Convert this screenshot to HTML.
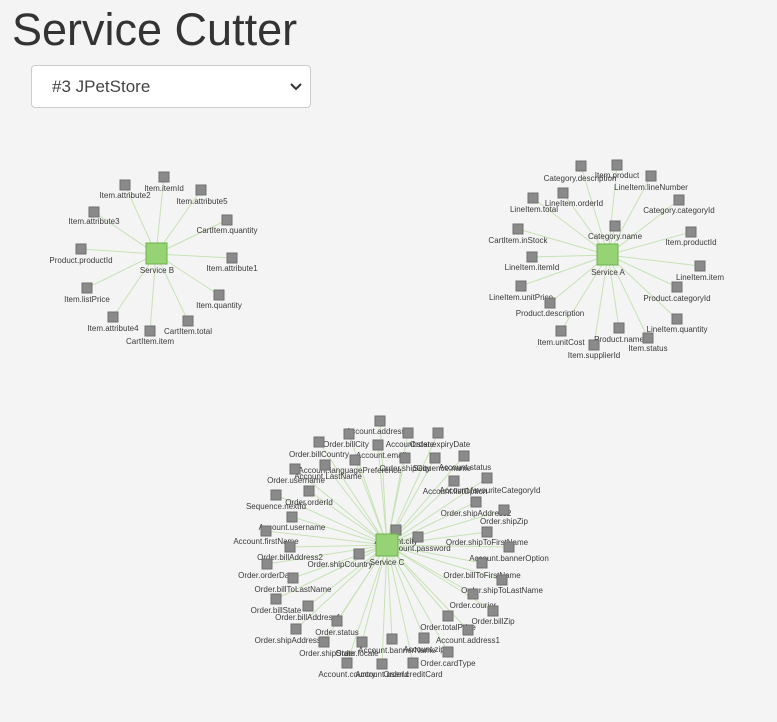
<!DOCTYPE html>
<html><head><meta charset="utf-8"><style>
body{margin:0;background:#f4f4f4;width:777px;height:722px;overflow:hidden;font-family:"Liberation Sans",sans-serif}
h1{position:absolute;left:12px;top:2px;margin:0;font-weight:400;font-size:45px;color:#333;line-height:56px}
.sel{position:absolute;left:31px;top:65px;width:280px;height:43px;background:#fff;border:1px solid #ccc;border-radius:4px;box-sizing:border-box}
.sel span{position:absolute;left:20px;top:11px;font-size:17px;color:#444}
.sel svg{position:absolute;right:8px;top:17px}
svg.g{position:absolute;left:0;top:0}
.g line{stroke:#c6e2b5;stroke-width:1}
.g rect.n{fill:#8a8a8a;stroke:#707070;stroke-width:1}
.g rect.s{fill:#95d374;stroke:#6cb24a;stroke-width:1}
.g text{font-size:8px;fill:#3a3a3a;text-anchor:middle;font-family:"Liberation Sans",sans-serif}
</style></head><body>
<h1>Service Cutter</h1>
<div class="sel"><span>#3 JPetStore</span><svg width="12" height="8"><path d="M1 1L6 6L11 1" stroke="#333" stroke-width="2" fill="none"/></svg></div>
<svg class="g" width="777" height="722">
<g>
<line x1="156" y1="254" x2="164" y2="177"/><line x1="156" y1="254" x2="125" y2="185"/><line x1="156" y1="254" x2="201" y2="190"/><line x1="156" y1="254" x2="94" y2="212"/><line x1="156" y1="254" x2="227" y2="220"/><line x1="156" y1="254" x2="81" y2="249"/><line x1="156" y1="254" x2="232" y2="258"/><line x1="156" y1="254" x2="87" y2="288"/><line x1="156" y1="254" x2="219" y2="295"/><line x1="156" y1="254" x2="113" y2="317"/><line x1="156" y1="254" x2="188" y2="321"/><line x1="156" y1="254" x2="150" y2="331"/>
<line x1="608" y1="255" x2="581" y2="166"/><line x1="608" y1="255" x2="617" y2="165"/><line x1="608" y1="255" x2="651" y2="176"/><line x1="608" y1="255" x2="563" y2="193"/><line x1="608" y1="255" x2="533" y2="198"/><line x1="608" y1="255" x2="679" y2="200"/><line x1="608" y1="255" x2="615" y2="226"/><line x1="608" y1="255" x2="518" y2="229"/><line x1="608" y1="255" x2="691" y2="232"/><line x1="608" y1="255" x2="532" y2="257"/><line x1="608" y1="255" x2="700" y2="266"/><line x1="608" y1="255" x2="521" y2="286"/><line x1="608" y1="255" x2="677" y2="287"/><line x1="608" y1="255" x2="550" y2="303"/><line x1="608" y1="255" x2="677" y2="319"/><line x1="608" y1="255" x2="561" y2="331"/><line x1="608" y1="255" x2="619" y2="328"/><line x1="608" y1="255" x2="648" y2="338"/><line x1="608" y1="255" x2="594" y2="345"/>
<line x1="387" y1="545" x2="380" y2="421"/><line x1="387" y1="545" x2="349" y2="434"/><line x1="387" y1="545" x2="319" y2="442"/><line x1="387" y1="545" x2="378" y2="445"/><line x1="387" y1="545" x2="355" y2="460"/><line x1="387" y1="545" x2="325" y2="465"/><line x1="387" y1="545" x2="295" y2="469"/><line x1="387" y1="545" x2="309" y2="491"/><line x1="387" y1="545" x2="276" y2="495"/><line x1="387" y1="545" x2="292" y2="517"/><line x1="387" y1="545" x2="266" y2="531"/><line x1="387" y1="545" x2="290" y2="547"/><line x1="387" y1="545" x2="359" y2="554"/><line x1="387" y1="545" x2="267" y2="564"/><line x1="387" y1="545" x2="293" y2="578"/><line x1="387" y1="545" x2="276" y2="599"/><line x1="387" y1="545" x2="308" y2="606"/><line x1="387" y1="545" x2="337" y2="621"/><line x1="387" y1="545" x2="296" y2="629"/><line x1="387" y1="545" x2="324" y2="642"/><line x1="387" y1="545" x2="362" y2="642"/><line x1="387" y1="545" x2="392" y2="639"/><line x1="387" y1="545" x2="347" y2="663"/><line x1="387" y1="545" x2="382" y2="664"/><line x1="387" y1="545" x2="408" y2="433"/><line x1="387" y1="545" x2="438" y2="433"/><line x1="387" y1="545" x2="405" y2="458"/><line x1="387" y1="545" x2="435" y2="458"/><line x1="387" y1="545" x2="464" y2="456"/><line x1="387" y1="545" x2="454" y2="481"/><line x1="387" y1="545" x2="487" y2="478"/><line x1="387" y1="545" x2="476" y2="502"/><line x1="387" y1="545" x2="504" y2="510"/><line x1="387" y1="545" x2="396" y2="530"/><line x1="387" y1="545" x2="418" y2="537"/><line x1="387" y1="545" x2="487" y2="532"/><line x1="387" y1="545" x2="509" y2="547"/><line x1="387" y1="545" x2="482" y2="563"/><line x1="387" y1="545" x2="502" y2="580"/><line x1="387" y1="545" x2="473" y2="594"/><line x1="387" y1="545" x2="493" y2="611"/><line x1="387" y1="545" x2="448" y2="616"/><line x1="387" y1="545" x2="468" y2="630"/><line x1="387" y1="545" x2="424" y2="638"/><line x1="387" y1="545" x2="448" y2="652"/><line x1="387" y1="545" x2="413" y2="663"/>
</g>
<g>
<rect class="n" x="159" y="172" width="10" height="10"/><text x="164" y="191">Item.itemId</text>
<rect class="n" x="120" y="180" width="10" height="10"/><text x="125" y="198">Item.attribute2</text>
<rect class="n" x="196" y="185" width="10" height="10"/><text x="202" y="204">Item.attribute5</text>
<rect class="n" x="89" y="207" width="10" height="10"/><text x="94" y="224">Item.attribute3</text>
<rect class="n" x="222" y="215" width="10" height="10"/><text x="227" y="233">CartItem.quantity</text>
<rect class="n" x="76" y="244" width="10" height="10"/><text x="81" y="263">Product.productId</text>
<rect class="n" x="227" y="253" width="10" height="10"/><text x="232" y="271">Item.attribute1</text>
<rect class="n" x="82" y="283" width="10" height="10"/><text x="87" y="302">Item.listPrice</text>
<rect class="n" x="214" y="290" width="10" height="10"/><text x="219" y="308">Item.quantity</text>
<rect class="n" x="108" y="312" width="10" height="10"/><text x="113" y="331">Item.attribute4</text>
<rect class="n" x="183" y="316" width="10" height="10"/><text x="188" y="334">CartItem.total</text>
<rect class="n" x="145" y="326" width="10" height="10"/><text x="150" y="344">CartItem.item</text>
<rect class="s" x="146" y="243" width="21" height="21"/><text x="157" y="273">Service B</text>

<rect class="n" x="576" y="161" width="10" height="10"/><text x="580" y="181">Category.description</text>
<rect class="n" x="612" y="160" width="10" height="10"/><text x="617" y="178">Item.product</text>
<rect class="n" x="646" y="171" width="10" height="10"/><text x="651" y="190">LineItem.lineNumber</text>
<rect class="n" x="558" y="188" width="10" height="10"/><text x="574" y="206">LineItem.orderId</text>
<rect class="n" x="528" y="193" width="10" height="10"/><text x="534" y="212">LineItem.total</text>
<rect class="n" x="674" y="195" width="10" height="10"/><text x="679" y="213">Category.categoryId</text>
<rect class="n" x="610" y="221" width="10" height="10"/><text x="615" y="239">Category.name</text>
<rect class="n" x="513" y="224" width="10" height="10"/><text x="518" y="243">CartItem.inStock</text>
<rect class="n" x="686" y="227" width="10" height="10"/><text x="691" y="245">Item.productId</text>
<rect class="n" x="527" y="252" width="10" height="10"/><text x="532" y="270">LineItem.itemId</text>
<rect class="n" x="695" y="261" width="10" height="10"/><text x="700" y="280">LineItem.item</text>
<rect class="n" x="516" y="281" width="10" height="10"/><text x="521" y="300">LineItem.unitPrice</text>
<rect class="n" x="672" y="282" width="10" height="10"/><text x="677" y="301">Product.categoryId</text>
<rect class="n" x="545" y="298" width="10" height="10"/><text x="550" y="316">Product.description</text>
<rect class="n" x="672" y="314" width="10" height="10"/><text x="677" y="332">LineItem.quantity</text>
<rect class="n" x="556" y="326" width="10" height="10"/><text x="561" y="345">Item.unitCost</text>
<rect class="n" x="614" y="323" width="10" height="10"/><text x="619" y="342">Product.name</text>
<rect class="n" x="643" y="333" width="10" height="10"/><text x="648" y="351">Item.status</text>
<rect class="n" x="589" y="340" width="10" height="10"/><text x="594" y="358">Item.supplierId</text>
<rect class="s" x="597" y="244" width="21" height="21"/><text x="608" y="275">Service A</text>

<rect class="n" x="375" y="416" width="10" height="10"/><text x="378" y="434">Account.address2</text>
<rect class="n" x="344" y="429" width="10" height="10"/><text x="346" y="447">Order.billCity</text>
<rect class="n" x="314" y="437" width="10" height="10"/><text x="319" y="457">Order.billCountry</text>
<rect class="n" x="373" y="440" width="10" height="10"/><text x="381" y="458">Account.email</text>
<rect class="n" x="350" y="455" width="10" height="10"/><text x="350" y="473">Account.languagePreference</text>
<rect class="n" x="320" y="460" width="10" height="10"/><text x="328" y="479">Account.LastName</text>
<rect class="n" x="290" y="464" width="10" height="10"/><text x="296" y="483">Order.username</text>
<rect class="n" x="304" y="486" width="10" height="10"/><text x="309" y="505">Order.orderId</text>
<rect class="n" x="271" y="490" width="10" height="10"/><text x="276" y="509">Sequence.nextId</text>
<rect class="n" x="287" y="512" width="10" height="10"/><text x="292" y="530">Account.username</text>
<rect class="n" x="261" y="526" width="10" height="10"/><text x="266" y="544">Account.firstName</text>
<rect class="n" x="285" y="542" width="10" height="10"/><text x="290" y="560">Order.billAddress2</text>
<rect class="n" x="354" y="549" width="10" height="10"/><text x="340" y="567">Order.shipCountry</text>
<rect class="n" x="262" y="559" width="10" height="10"/><text x="267" y="578">Order.orderDate</text>
<rect class="n" x="288" y="573" width="10" height="10"/><text x="293" y="592">Order.billToLastName</text>
<rect class="n" x="271" y="594" width="10" height="10"/><text x="276" y="613">Order.billState</text>
<rect class="n" x="303" y="601" width="10" height="10"/><text x="308" y="620">Order.billAddress1</text>
<rect class="n" x="332" y="616" width="10" height="10"/><text x="337" y="635">Order.status</text>
<rect class="n" x="291" y="624" width="10" height="10"/><text x="290" y="643">Order.shipAddress1</text>
<rect class="n" x="319" y="637" width="10" height="10"/><text x="327" y="656">Order.shipState</text>
<rect class="n" x="357" y="637" width="10" height="10"/><text x="357" y="656">Order.locale</text>
<rect class="n" x="387" y="634" width="10" height="10"/><text x="397" y="653">Account.bannerName</text>
<rect class="n" x="342" y="658" width="10" height="10"/><text x="347" y="677">Account.country</text>
<rect class="n" x="377" y="659" width="10" height="10"/><text x="382" y="677">Account.userId</text>
<rect class="n" x="403" y="428" width="10" height="10"/><text x="410" y="447">Account.state</text>
<rect class="n" x="433" y="428" width="10" height="10"/><text x="440" y="447">Order.expiryDate</text>
<rect class="n" x="400" y="453" width="10" height="10"/><text x="405" y="471">Order.shipCity</text>
<rect class="n" x="430" y="453" width="10" height="10"/><text x="442" y="471">Sequence.name</text>
<rect class="n" x="459" y="451" width="10" height="10"/><text x="465" y="470">Account.status</text>
<rect class="n" x="449" y="476" width="10" height="10"/><text x="455" y="494">Account.listOption</text>
<rect class="n" x="482" y="473" width="10" height="10"/><text x="490" y="493">Account.favouriteCategoryId</text>
<rect class="n" x="471" y="497" width="10" height="10"/><text x="476" y="516">Order.shipAddress2</text>
<rect class="n" x="499" y="505" width="10" height="10"/><text x="504" y="524">Order.shipZip</text>
<rect class="n" x="391" y="525" width="10" height="10"/><text x="396" y="544">Account.city</text>
<rect class="n" x="413" y="532" width="10" height="10"/><text x="418" y="551">Account.password</text>
<rect class="n" x="482" y="527" width="10" height="10"/><text x="487" y="545">Order.shipToFirstName</text>
<rect class="n" x="504" y="542" width="10" height="10"/><text x="509" y="561">Account.bannerOption</text>
<rect class="n" x="477" y="558" width="10" height="10"/><text x="482" y="578">Order.billToFirstName</text>
<rect class="n" x="497" y="575" width="10" height="10"/><text x="502" y="593">Order.shipToLastName</text>
<rect class="n" x="468" y="589" width="10" height="10"/><text x="473" y="608">Order.courier</text>
<rect class="n" x="488" y="606" width="10" height="10"/><text x="493" y="624">Order.billZip</text>
<rect class="n" x="443" y="611" width="10" height="10"/><text x="448" y="630">Order.totalPrice</text>
<rect class="n" x="463" y="625" width="10" height="10"/><text x="468" y="643">Account.address1</text>
<rect class="n" x="419" y="633" width="10" height="10"/><text x="424" y="652">Account.zip</text>
<rect class="n" x="443" y="647" width="10" height="10"/><text x="448" y="666">Order.cardType</text>
<rect class="n" x="408" y="658" width="10" height="10"/><text x="413" y="677">Order.creditCard</text>
<rect class="s" x="376" y="534" width="22" height="22"/><text x="387" y="565">Service C</text>
</g>
</svg>
</body></html>
